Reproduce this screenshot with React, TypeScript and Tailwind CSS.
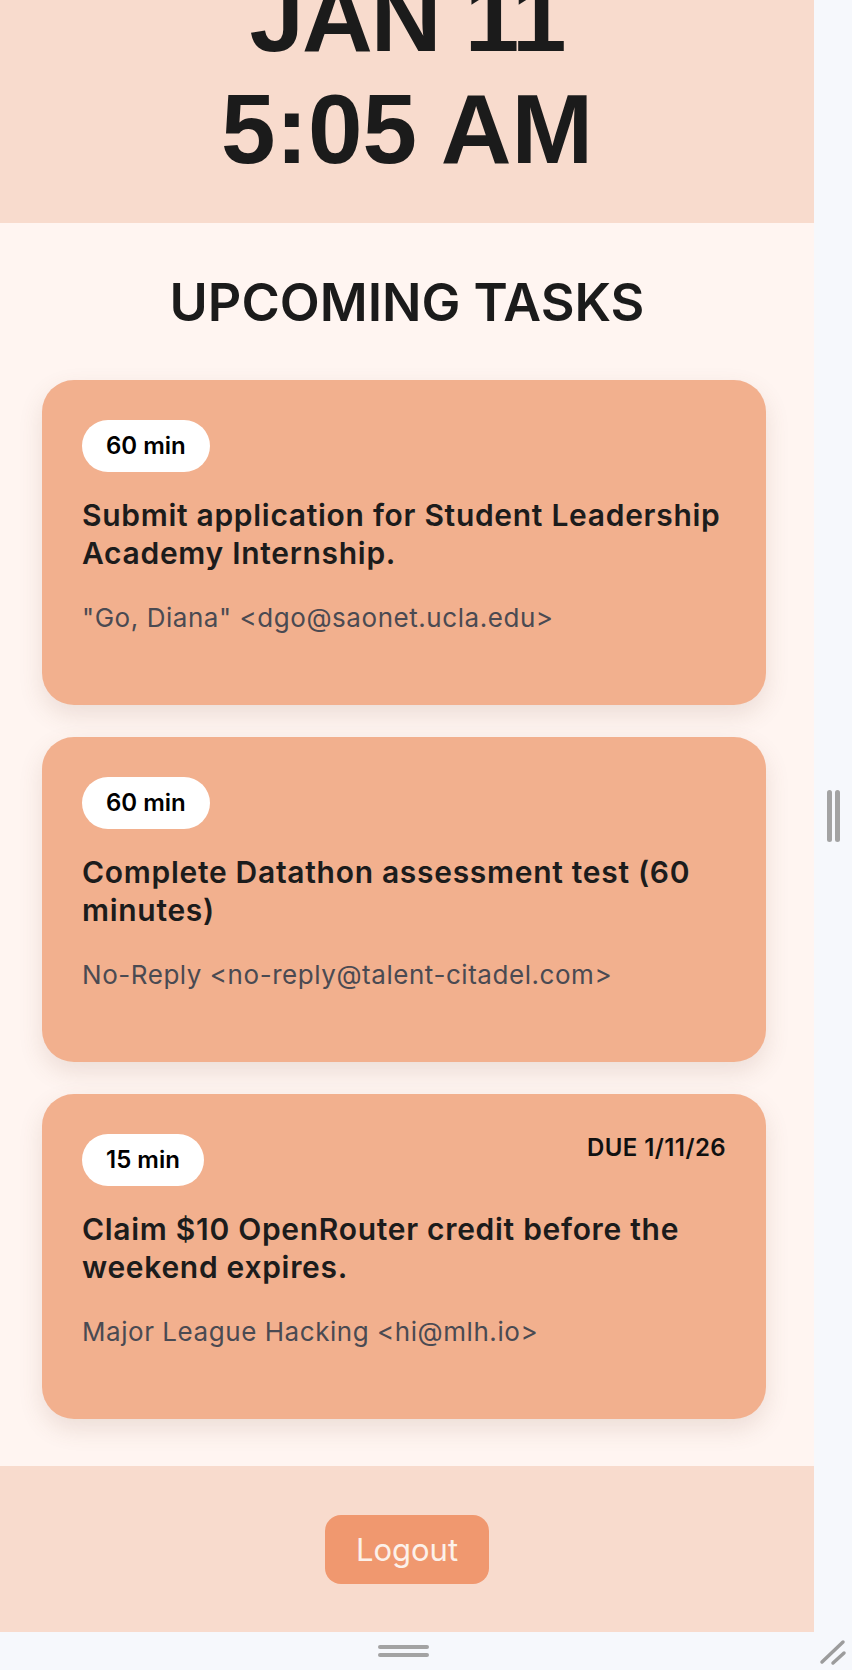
const tasks = [
  {
    minutes: "60 min",
    title: "Submit application for Student Leadership Academy Internship.",
    from: "\"Go, Diana\" <dgo@saonet.ucla.edu>",
  },
  {
    minutes: "60 min",
    title: "Complete Datathon assessment test (60 minutes)",
    from: "No-Reply <no-reply@talent-citadel.com>",
  },
  {
    minutes: "15 min",
    title: "Claim $10 OpenRouter credit before the weekend expires.",
    from: "Major League Hacking <hi@mlh.io>",
    due: "DUE 1/11/26",
  },
];

const sans = "font-['Inter','Liberation_Sans',sans-serif]";

function TaskCard({ task }: { task: (typeof tasks)[number] }) {
  return (
    <div className="flex min-h-[325px] flex-col rounded-[32px] bg-[#f2b08e] px-10 pt-10 shadow-[0_10px_24px_rgba(120,80,60,0.14)]">
      <div className="flex items-start justify-between">
        <span className="rounded-full bg-white px-6 py-3 text-2xl font-semibold leading-7 text-black">
          {task.minutes}
        </span>
        {task.due && (
          <span className="text-2xl font-semibold leading-7 tracking-[0.4px] text-[#111]">{task.due}</span>
        )}
      </div>
      <h3 className="mt-[25px] text-[30px] font-semibold leading-[37.5px] tracking-[0.7px] text-[#1c1c1c]">
        {task.title}
      </h3>
      <p className="mt-[28px] text-[26px] leading-9 tracking-[0.55px] text-[#4a4a52]">{task.from}</p>
    </div>
  );
}

export default function App() {
  return (
    <div className={`grid h-[1670px] w-[852px] grid-cols-[814px_38px] grid-rows-[1632px_38px] bg-[#f6f8fc] ${sans}`}>
      <main className="flex flex-col overflow-hidden">
        <header className="flex h-[223px] flex-col items-center justify-end overflow-hidden bg-[#f8dbcd] pb-[38px]">
          <div className="text-center font-['Liberation_Sans',Arial,sans-serif] text-[98px] font-bold leading-[112px] text-[#1b1b1b]">
            <div className="tracking-[-2px]">JAN 11</div>
            <div>5:05 AM</div>
          </div>
        </header>

        <section className="flex flex-1 flex-col bg-[#fff5f1] px-[42px] pt-[50px]">
          <h2 className="text-center text-[52px] font-semibold leading-[60px] text-[#1b1b1b]">
            UPCOMING TASKS
          </h2>
          <div className="mt-[47px] flex flex-col gap-8 pr-[6px]">
            {tasks.map((t, i) => (
              <TaskCard key={i} task={t} />
            ))}
          </div>
        </section>

        <footer className="flex h-[166px] items-center justify-center bg-[#f8dbcd]">
          <button
            type="button"
            className="h-[69px] rounded-2xl bg-[#f0986f] px-[31px] text-[31px] leading-none text-[#fcf1ea]"
          >
            Logout
          </button>
        </footer>
      </main>

      {/* right resize gutter */}
      <div className="flex items-center justify-center gap-[3px]">
        <span className="h-[52px] w-[5px] rounded-full bg-[#a3a3a3]" />
        <span className="h-[52px] w-[5px] rounded-full bg-[#a3a3a3]" />
      </div>

      {/* bottom resize gutter */}
      <div className="flex flex-col items-center justify-center gap-1 pr-[7px]">
        <span className="h-1 w-[51px] rounded-full bg-[#a3a3a3]" />
        <span className="h-1 w-[51px] rounded-full bg-[#a3a3a3]" />
      </div>

      <div>
        <svg width="38" height="38" viewBox="0 0 38 38" className="block">
          <line x1="8" y1="30" x2="29" y2="10" stroke="#9c9c9c" strokeWidth="3.5" strokeLinecap="round" />
          <line x1="19" y1="31" x2="30" y2="21" stroke="#9c9c9c" strokeWidth="3.5" strokeLinecap="round" />
        </svg>
      </div>
    </div>
  );
}
